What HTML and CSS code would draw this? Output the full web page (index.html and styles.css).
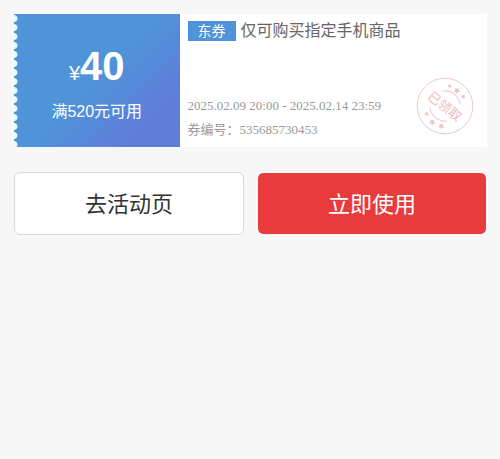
FILE: index.html
```html
<!DOCTYPE html>
<html lang="zh-CN">
<head>
    <meta charset="UTF-8">
    <meta name="viewport" content="width=device-width, initial-scale=1.0">
    <title>优惠券</title>
    <link rel="stylesheet" href="styles.css">
</head>
<body>
    <div class="container">
        <div class="coupon">
            <div class="coupon-value">
                <div class="price">¥<strong>40</strong></div>
                <div class="limit">满520元可用</div>
            </div>
            <div class="coupon-info">
                <div class="title"><span class="tag">东券</span>仅可购买指定手机商品</div>
                <div class="detail">
                    <div>2025.02.09 20:00 - 2025.02.14 23:59</div>
                    <div>券编号：535685730453</div>
                </div>
                <svg class="stamp" viewBox="0 0 58 58" role="img" aria-label="已领取">
                    <circle cx="29" cy="29" r="27.8" />
                    <g transform="rotate(38 29 29)">
                        <path d="M18 18.5A15.5 15.5 0 0 1 40 18.5M18 39.5A15.5 15.5 0 0 0 40 39.5" />
                        <text x="29" y="34" text-anchor="middle">已领取</text>
                        <g class="stars">
                            <path d="M29 6l1 2.2 2.4.3-1.8 1.6.5 2.4-2.1-1.2-2.1 1.2.5-2.4-1.8-1.6 2.4-.3z" />
                            <path d="M20.5 8l.8 1.5 1.6.2-1.2 1.1.3 1.6-1.5-.8-1.5.8.3-1.6-1.2-1.1 1.6-.2z" />
                            <path d="M37.5 8l.8 1.5 1.6.2-1.2 1.1.3 1.6-1.5-.8-1.5.8.3-1.6-1.2-1.1 1.6-.2z" />
                            <path d="M29 46l1 2.2 2.4.3-1.8 1.6.5 2.4-2.1-1.2-2.1 1.2.5-2.4-1.8-1.6 2.4-.3z" />
                            <path d="M19.5 44l.8 1.5 1.6.2-1.2 1.1.3 1.6-1.5-.8-1.5.8.3-1.6-1.2-1.1 1.6-.2z" />
                            <path d="M38.5 44l1 2 2.1.3-1.5 1.4.4 2.1-2-1.1-2 1.1.4-2.1-1.5-1.4 2.1-.3z" />
                        </g>
                    </g>
                </svg>
            </div>
        </div>

        <div class="actions">
            <button type="button" class="btn">去活动页</button>
            <button type="button" class="btn btn-primary">立即使用</button>
        </div>
    </div>
</body>
</html>
```

FILE: styles.css
```css
* {
    box-sizing: border-box;
}
body {
    margin: 0;
    background: #f7f7f7;
    font-family: "Liberation Sans", "Noto Sans CJK SC", sans-serif;
}
.container {
    padding: 14px 13px 14px 14px;
}
.coupon {
    display: flex;
    min-height: 133px;
    background: #fff;
}
.coupon-value {
    flex: 0 0 35%;
    display: flex;
    flex-direction: column;
    align-items: center;
    justify-content: center;
    padding-top: 8px;
    color: #fff;
    /* row of round notches down the left edge */
    background:
        radial-gradient(circle at 0 50%, #e3f8ff 3px, transparent 4px) 0 0 / 5px 9px repeat-y,
        linear-gradient(135deg, #4f93d8 50%, #607dda 80%);
}
.price {
    font-size: 20px;
    line-height: 48px;
}
.price strong {
    font-size: 40px;
}
.limit {
    font-size: 16px;
    line-height: 30px;
}
.coupon-info {
    position: relative;
    flex: 1;
    display: flex;
    flex-direction: column;
    justify-content: space-between;
    padding: 5px 8px;
}
.title {
    display: flex;
    align-items: center;
    font-size: 16px;
    line-height: 24px;
    color: #666;
}
.tag {
    margin-right: 5px;
    padding: 0 10px;
    font-size: 14px;
    line-height: 20px;
    color: #fff;
    background: #4f93d8;
}
.detail {
    font-family: "Liberation Serif", "Noto Sans CJK SC", serif;
    font-size: 13px;
    line-height: 24px;
    color: #999;
}
.stamp {
    position: absolute;
    right: 13px;
    bottom: 12px;
    width: 58px;
    height: 58px;
    fill: none;
    stroke: #f1c6c8;
}
.stamp text {
    font-size: 13px;
    fill: #f0b8bb;
    stroke: none;
}
.stars {
    fill: #f1c0c2;
    stroke: none;
}
.actions {
    display: flex;
    gap: 13px;
    margin-top: 25px;
}
.btn {
    flex: 1;
    height: 63px;
    padding: 0 0 4px;
    border: 1px solid #d8d8d8;
    border-radius: 6px;
    background: #fff;
    color: #333;
    font-family: inherit;
    font-size: 22px;
    cursor: pointer;
}
.btn-primary {
    border-color: #f7f7f7;
    background: #e93b3d;
    background-clip: padding-box;
    color: #fff;
}
```
